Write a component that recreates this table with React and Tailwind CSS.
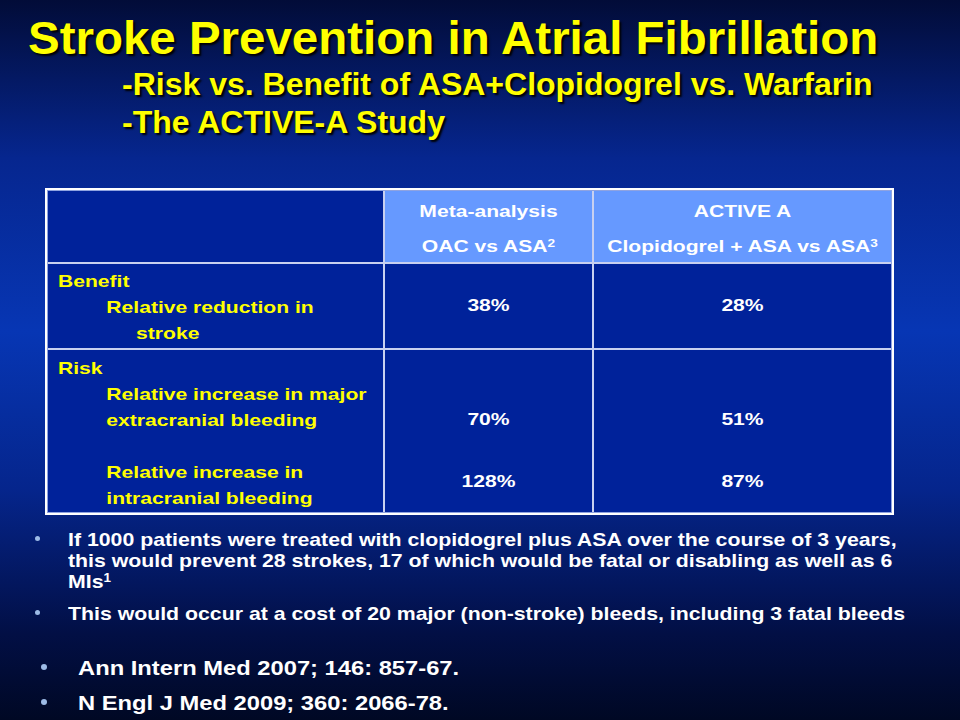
export default function App() {
  const yellow = "text-[#ffff00]";
  const cell = "bg-[#00229a] border-[#c8d0f0]";
  return (
    <div className="w-[960px] h-[720px] overflow-hidden bg-[linear-gradient(to_bottom,#020c38_0%,#06268f_22%,#0736b4_46%,#05258c_68%,#020f45_88%,#000824_100%)] font-['Liberation_Sans',Arial,sans-serif] font-bold">
      {/* Title */}
      <div className={`${yellow} [text-shadow:2px_2px_2px_#000] pt-[13px]`}>
        <h1 className="ml-[28px] text-[47px] leading-[49px] scale-x-[1.01] origin-left whitespace-nowrap">Stroke Prevention in Atrial Fibrillation</h1>
        <div className="pl-[122px] text-[32px] leading-[38px] mt-[3px]">-Risk vs. Benefit of ASA+Clopidogrel vs. Warfarin</div>
        <div className="pl-[122px] text-[32px] leading-[38px]">-The ACTIVE-A Study</div>
      </div>

      {/* Table */}
      <div className="ml-[45px] mt-[47px] w-[849px] border-2 border-white p-px bg-[#8fa3e0]">
        <table className="w-full border-collapse text-[17px] leading-[26px] text-white table-fixed">
          <colgroup>
            <col className="w-[336px]" />
            <col className="w-[209px]" />
            <col />
          </colgroup>
          <tbody>
            <tr className="h-[72px]">
              <td className={`${cell} border-r-2 border-b-2`}></td>
              <td className="bg-[#6699ff] border-r-2 border-b-2 border-[#c8d0f0] text-center align-top pt-[8px]">
                <div className="scale-x-[1.24] whitespace-nowrap">
                  <div>Meta-analysis</div>
                  <div className="mt-[9px]">OAC vs ASA<sup className="text-[11px]">2</sup></div>
                </div>
              </td>
              <td className="bg-[#6699ff] border-b-2 border-[#c8d0f0] text-center align-top pt-[8px]">
                <div className="scale-x-[1.24] whitespace-nowrap">
                  <div>ACTIVE A</div>
                  <div className="mt-[9px]">Clopidogrel + ASA vs ASA<sup className="text-[11px]">3</sup></div>
                </div>
              </td>
            </tr>
            <tr className="h-[86px]">
              <td className={`${cell} border-r-2 border-b-2 align-top pt-[5px] pl-[10px] ${yellow}`}>
                <div className="scale-x-[1.24] origin-left whitespace-nowrap">
                  <div>Benefit</div>
                  <div className="pl-[39px]">Relative reduction in</div>
                  <div className="pl-[63px]">stroke</div>
                </div>
              </td>
              <td className={`${cell} border-r-2 border-b-2 text-center`}>
                <div className="scale-x-[1.24]">38%</div>
              </td>
              <td className={`${cell} border-b-2 text-center`}>
                <div className="scale-x-[1.24]">28%</div>
              </td>
            </tr>
            <tr className="h-[162px]">
              <td className={`${cell} border-r-2 align-top pt-[6px] pl-[10px] ${yellow}`}>
                <div className="scale-x-[1.24] origin-left whitespace-nowrap">
                  <div>Risk</div>
                  <div className="pl-[39px]">Relative increase in major</div>
                  <div className="pl-[39px]">extracranial bleeding</div>
                  <div className="pl-[39px] mt-[26px]">Relative increase in</div>
                  <div className="pl-[39px]">intracranial bleeding</div>
                </div>
              </td>
              <td className={`${cell} border-r-2 text-center align-top pt-[57px]`}>
                <div className="scale-x-[1.24]">
                  <div>70%</div>
                  <div className="mt-[36px]">128%</div>
                </div>
              </td>
              <td className={`${cell} text-center align-top pt-[57px]`}>
                <div className="scale-x-[1.24]">
                  <div>51%</div>
                  <div className="mt-[36px]">87%</div>
                </div>
              </td>
            </tr>
          </tbody>
        </table>
      </div>

      {/* Bullets */}
      <div className="text-white text-[19px] leading-[21px] mt-[14px]">
        <div className="flex">
          <div className="w-[68px] pl-[35px] pt-[7px]">
            <div className="w-[5px] h-[5px] rounded-full bg-[#9dbbe6]"></div>
          </div>
          <p className="scale-x-[1.12] origin-left whitespace-nowrap">
            If 1000 patients were treated with clopidogrel plus ASA over the course of 3 years,
            <br />
            this would prevent 28 strokes, 17 of which would be fatal or disabling as well as 6
            <br />
            MIs<sup className="text-[12px]">1</sup>
          </p>
        </div>
        <div className="flex mt-[11px]">
          <div className="w-[68px] pl-[35px] pt-[7px]">
            <div className="w-[5px] h-[5px] rounded-full bg-[#9dbbe6]"></div>
          </div>
          <p className="scale-x-[1.12] origin-left whitespace-nowrap">
            This would occur at a cost of 20 major (non-stroke) bleeds, including 3 fatal bleeds
          </p>
        </div>
      </div>

      {/* References */}
      <div className="text-white text-[21px] leading-[35px] mt-[26px]">
        <div className="flex">
          <div className="w-[78px] pl-[41px] pt-[14px]">
            <div className="w-[6px] h-[6px] rounded-full bg-[#9dbbe6]"></div>
          </div>
          <span className="scale-x-[1.13] origin-left whitespace-nowrap">Ann Intern Med 2007; 146: 857-67.</span>
        </div>
        <div className="flex">
          <div className="w-[78px] pl-[41px] pt-[14px]">
            <div className="w-[6px] h-[6px] rounded-full bg-[#9dbbe6]"></div>
          </div>
          <span className="scale-x-[1.13] origin-left whitespace-nowrap">N Engl J Med 2009; 360: 2066-78.</span>
        </div>
      </div>
    </div>
  );
}
